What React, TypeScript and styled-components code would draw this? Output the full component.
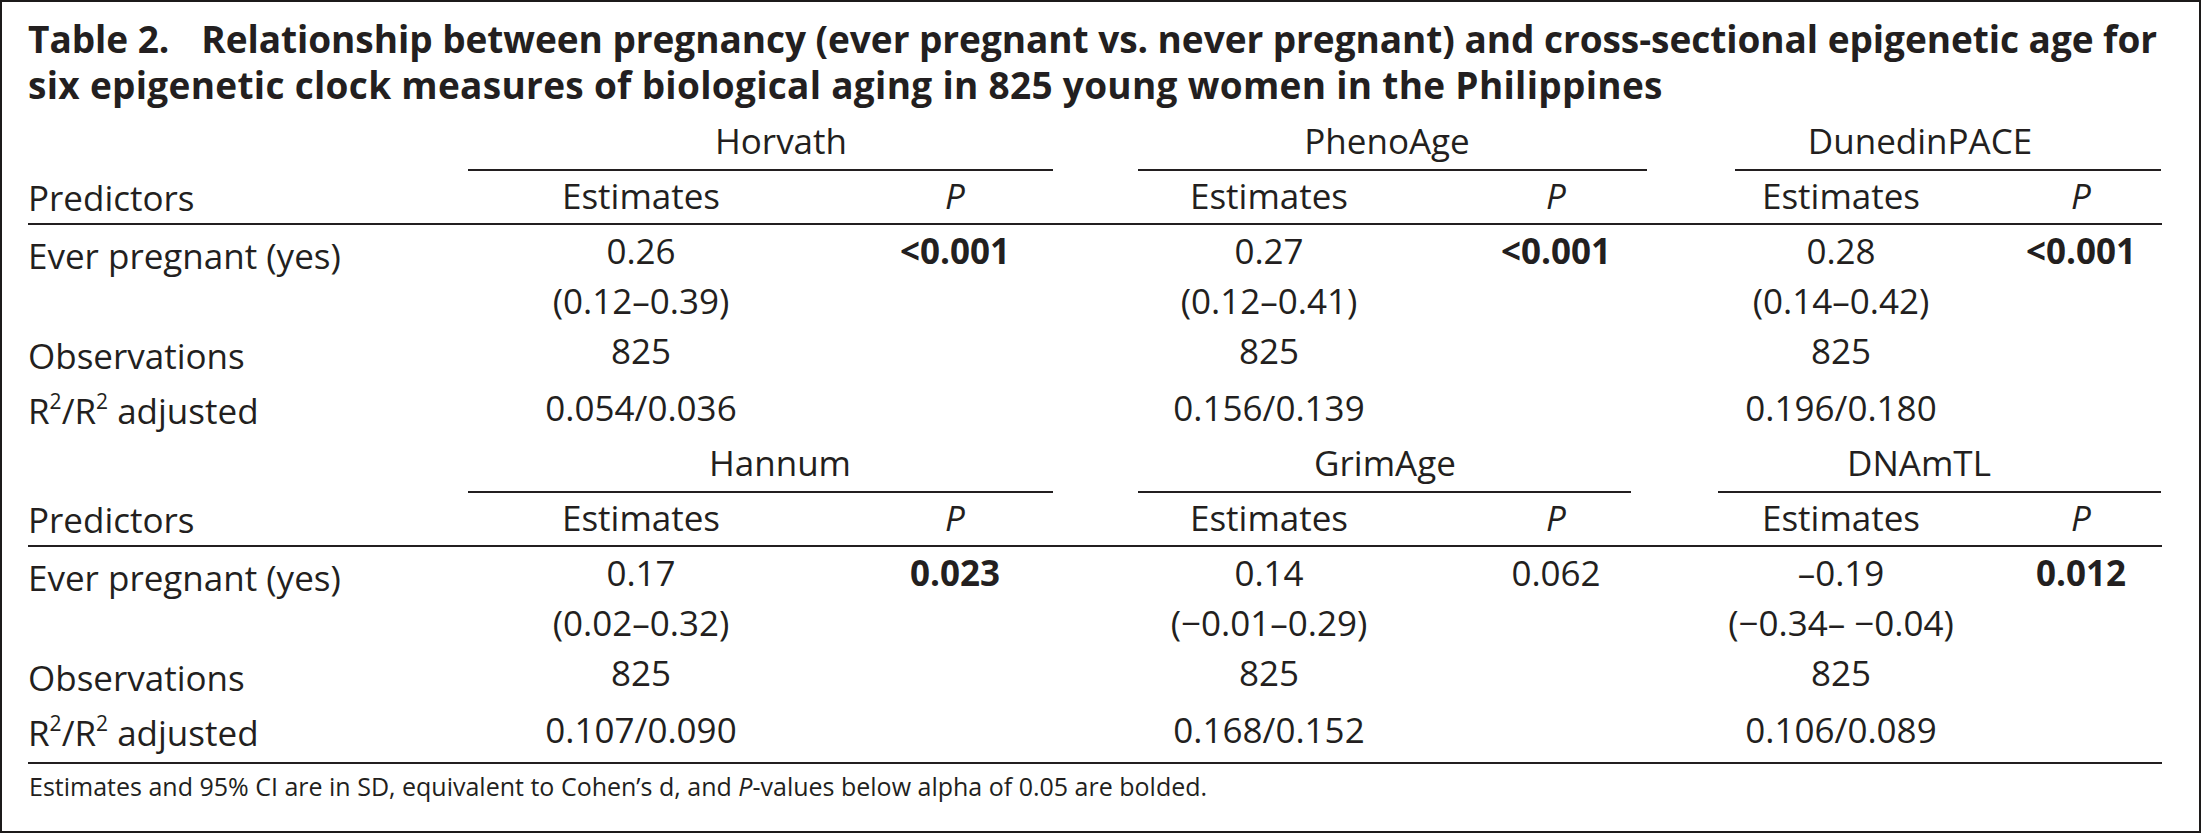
import React from "react";
import styled, { createGlobalStyle } from "styled-components";

const INK = "#231f20";

const GlobalStyle = createGlobalStyle`
  html, body { margin: 0; padding: 0; background: #ffffff; }
  body { font-family: "Open Sans", "Noto Sans", sans-serif; color: ${INK}; }
`;

const Frame = styled.div`
  box-sizing: border-box;
  width: 2201px;
  height: 833px;
  border: 2px solid #1c1a1a;
  padding: 14px 37px 0 26px;
  background: #ffffff;
  overflow: hidden;
`;

const Title = styled.h1`
  margin: 0;
  font-size: 37px;
  font-weight: 700;
  line-height: 46px;
  white-space: nowrap;
`;

const TitleLine = styled.span<{ $track: number }>`
  display: block;
  letter-spacing: ${(p) => p.$track}px;
`;

const TableNo = styled.span`
  margin-right: 32px;
`;

const Grid = styled.div`
  display: grid;
  grid-template-columns: 452px 322px 306px 322px 252px 318px 162px;
  align-items: start;
  margin-top: 10px;
  font-size: 35px;
`;

const Blank = styled.div<{ $top: number }>`
  grid-column: 1;
  margin-top: ${(p) => p.$top}px;
`;

const GroupCell = styled.div<{ $span: string; $top: number }>`
  grid-column: ${(p) => p.$span};
  display: flex;
  flex-direction: column;
  margin-top: ${(p) => p.$top}px;
`;

const GroupName = styled.span<{ $shift: number }>`
  line-height: 46px;
  text-align: center;
  padding-right: ${(p) => p.$shift}px;
  white-space: nowrap;
`;

const GroupLine = styled.div<{ $l: number; $r: number }>`
  height: 2px;
  background: ${INK};
  margin: 5px ${(p) => p.$r}px 0 ${(p) => p.$l}px;
`;

const Label = styled.div<{ $top?: number }>`
  grid-column: 1;
  line-height: 50px;
  padding-top: ${(p) => p.$top ?? 0}px;
  white-space: nowrap;
`;

const Value = styled.div<{ $top?: number; $bottom?: number; $bold?: boolean }>`
  line-height: 50px;
  text-align: center;
  padding-top: ${(p) => p.$top ?? 0}px;
  padding-bottom: ${(p) => p.$bottom ?? 0}px;
  font-weight: ${(p) => (p.$bold ? 700 : 400)};
  white-space: nowrap;
`;

const Rule = styled.div<{ $top?: number }>`
  grid-column: 1 / -1;
  height: 2px;
  margin-top: ${(p) => p.$top ?? 0}px;
  background: ${INK};
`;

const Ital = styled.i`
  font-style: italic;
`;

const Sup = styled.sup`
  font-size: 0.6em;
  line-height: 0;
  vertical-align: 0.72em;
`;

const Footnote = styled.p`
  margin: 6px 0 0 1px;
  font-size: 25px;
  line-height: 32px;
  white-space: nowrap;
`;

type Clock = {
  name: string;
  est: string;
  ci: string;
  p: string;
  bold: boolean;
  r2: string;
  ul: [number, number];
  shift: number;
};

type Block = { clocks: Clock[]; top: number; subPad: number };

const SPANS = ["2 / 4", "4 / 6", "6 / 8"];

const BLOCKS: Block[] = [
  {
    top: 0,
    subPad: 0,
    clocks: [
      { name: "Horvath", est: "0.26", ci: "(0.12–0.39)", p: "<0.001", bold: true, r2: "0.054/0.036", ul: [-12, 55], shift: 26 },
      { name: "PhenoAge", est: "0.27", ci: "(0.12–0.41)", p: "<0.001", bold: true, r2: "0.156/0.139", ul: [30, 35], shift: 16 },
      { name: "DunedinPACE", est: "0.28", ci: "(0.14–0.42)", p: "<0.001", bold: true, r2: "0.196/0.180", ul: [53, 1], shift: 4 },
    ],
  },
  {
    top: 4,
    subPad: 1,
    clocks: [
      { name: "Hannum", est: "0.17", ci: "(0.02–0.32)", p: "0.023", bold: true, r2: "0.107/0.090", ul: [-12, 55], shift: 28 },
      { name: "GrimAge", est: "0.14", ci: "(−0.01–0.29)", p: "0.062", bold: false, r2: "0.168/0.152", ul: [30, 51], shift: 20 },
      { name: "DNAmTL", est: "–0.19", ci: "(−0.34– −0.04)", p: "0.012", bold: true, r2: "0.106/0.089", ul: [36, 1], shift: 6 },
    ],
  },
];

function ClockBlock({ block }: { block: Block }) {
  const { clocks, top, subPad } = block;
  return (
    <>
      <Blank $top={top} />
      {clocks.map((c, i) => (
        <GroupCell key={c.name} $span={SPANS[i]} $top={top}>
          <GroupName $shift={c.shift}>{c.name}</GroupName>
          <GroupLine $l={c.ul[0]} $r={c.ul[1]} />
        </GroupCell>
      ))}

      <Label $top={2}>Predictors</Label>
      {clocks.map((c) => (
        <React.Fragment key={c.name + "-h"}>
          <Value $bottom={subPad}>Estimates</Value>
          <Value $bottom={subPad}>
            <Ital>P</Ital>
          </Value>
        </React.Fragment>
      ))}
      <Rule />

      <Label $top={6}>Ever pregnant (yes)</Label>
      {clocks.map((c) => (
        <React.Fragment key={c.name + "-e"}>
          <Value $top={1}>
            {c.est}
            <br />
            {c.ci}
          </Value>
          <Value $top={1} $bold={c.bold}>
            {c.p}
          </Value>
        </React.Fragment>
      ))}

      <Label $top={5}>Observations</Label>
      {clocks.map((c) => (
        <React.Fragment key={c.name + "-o"}>
          <Value>825</Value>
          <Value />
        </React.Fragment>
      ))}

      <Label $top={5}>
        R<Sup>2</Sup>/R<Sup>2</Sup> adjusted
      </Label>
      {clocks.map((c) => (
        <React.Fragment key={c.name + "-r"}>
          <Value $top={2}>{c.r2}</Value>
          <Value />
        </React.Fragment>
      ))}
    </>
  );
}

export default function App() {
  return (
    <>
      <GlobalStyle />
      <Frame>
        <Title>
          <TitleLine $track={-0.05}>
            <TableNo>Table 2.</TableNo>Relationship between pregnancy (ever pregnant vs. never pregnant) and cross-sectional epigenetic age for
          </TitleLine>
          <TitleLine $track={0.3}>
            six epigenetic clock measures of biological aging in 825 young women in the Philippines
          </TitleLine>
        </Title>
        <Grid>
          {BLOCKS.map((b, i) => (
            <ClockBlock key={i} block={b} />
          ))}
          <Rule $top={4} />
        </Grid>
        <Footnote>
          Estimates and 95% CI are in SD, equivalent to Cohen’s d, and <Ital>P</Ital>-values below alpha of 0.05 are bolded.
        </Footnote>
      </Frame>
    </>
  );
}
